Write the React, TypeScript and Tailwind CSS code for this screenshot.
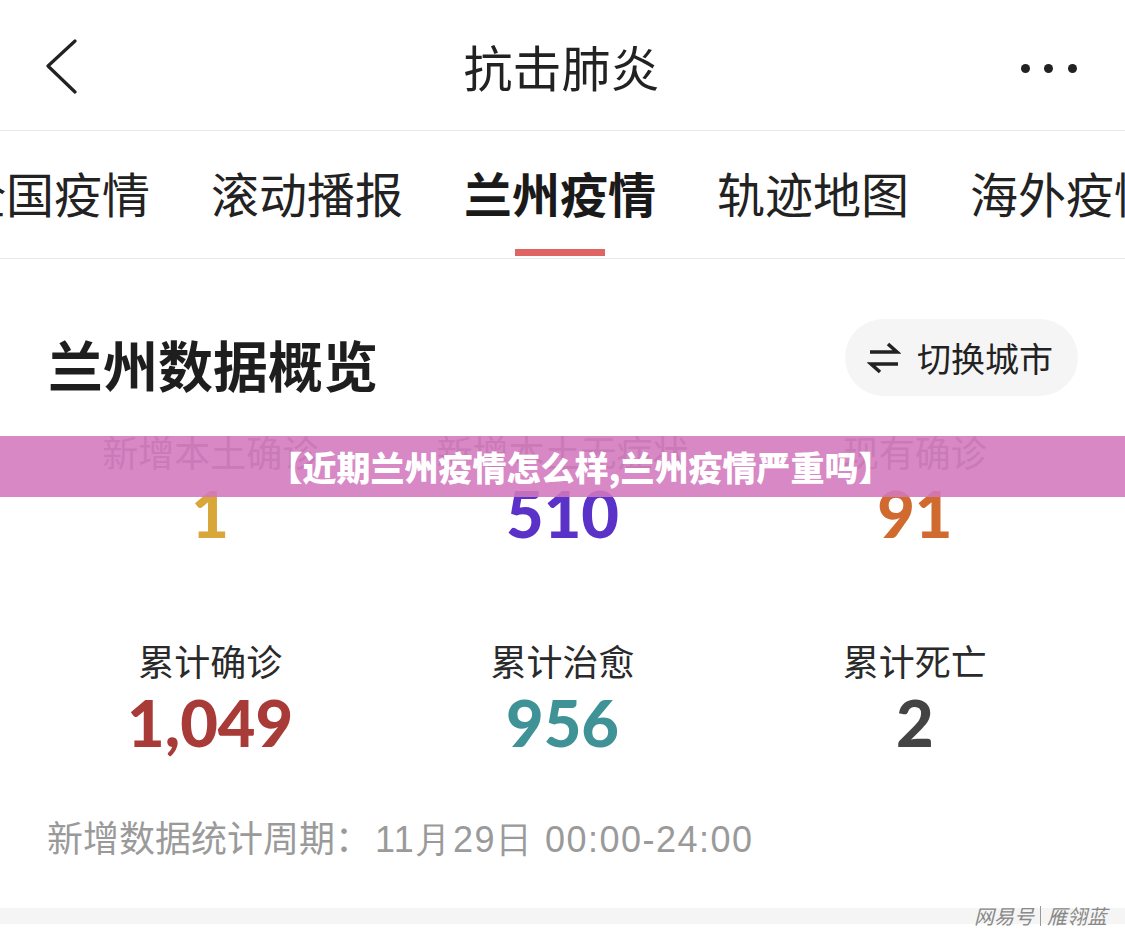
const CJK = "font-['Noto_Sans_CJK_SC','Noto_Sans',sans-serif]";
const NUM = "font-['Lato','Noto_Sans',sans-serif]";

const TABS = ["全国疫情", "滚动播报", "兰州疫情", "轨迹地图", "海外疫情"];

const ROW_ONE = [
  { label: "新增本土确诊", value: "1", color: "text-[#d9a63a]" },
  { label: "新增本土无症状", value: "510", color: "text-[#5a32c8]" },
  { label: "现有确诊", value: "91", color: "text-[#d06a2f]" },
];

const ROW_TWO = [
  { label: "累计确诊", value: "1,049", color: "text-[#a83b37]" },
  { label: "累计治愈", value: "956", color: "text-[#3f9296]" },
  { label: "累计死亡", value: "2", color: "text-[#444444]" },
];

function StatRow({
  items,
  labelColor,
  className,
}: {
  items: typeof ROW_ONE;
  labelColor: string;
  className?: string;
}) {
  return (
    <div className={`grid grid-cols-3 px-[34px] ${className ?? ""}`}>
      {items.map((item) => (
        <div key={item.label} className="flex flex-col items-center">
          <div className={`${CJK} text-[36px] leading-[40px] ${labelColor}`}>{item.label}</div>
          <div className={`${NUM} mt-[10px] text-[65px] leading-[64px] font-black ${item.color}`}>
            {item.value}
          </div>
        </div>
      ))}
    </div>
  );
}

export default function App() {
  return (
    <div className={`relative h-[935px] w-[1125px] overflow-hidden bg-white ${CJK}`}>
      {/* top bar */}
      <div className="flex h-[131px] items-center justify-between border-b border-[#e8e8e8] pl-[44px] pr-[48px]">
        <svg width="34" height="56" viewBox="0 0 34 56" className="mt-[4px]">
          <path d="M31 2 L4 27 L31 53" fill="none" stroke="#222" strokeWidth="3.2" strokeLinecap="round" strokeLinejoin="round" />
        </svg>
        <div className="ml-[24px] text-[49px] leading-none text-[#222]">抗击肺炎</div>
        <div className="mt-[6px] flex w-[56px] items-center justify-between">
          <span className="h-[9px] w-[9px] rounded-full bg-[#222]" />
          <span className="h-[9px] w-[9px] rounded-full bg-[#222]" />
          <span className="h-[9px] w-[9px] rounded-full bg-[#222]" />
        </div>
      </div>

      {/* tabs */}
      <div className="relative h-[128px] border-b border-[#e8e8e8]">
        <div className="ml-[-42px] flex h-full items-start gap-[61px] whitespace-nowrap pt-[33px]">
          {TABS.map((tab) => (
            <div key={tab} className="relative flex flex-col items-center">
              <span
                className={`text-[48px] leading-[56px] ${
                  tab === "兰州疫情" ? "font-bold text-[#1a1a1a]" : "text-[#222]"
                }`}
              >
                {tab}
              </span>
              {tab === "兰州疫情" && (
                <span className="absolute top-[85px] h-[7px] w-[90px] bg-[#e06464]" />
              )}
            </div>
          ))}
        </div>
      </div>

      {/* section header */}
      <div className="flex items-center justify-between pl-[48px] pr-[47px] pt-[72px]">
        <div className="text-[55px] font-bold leading-none text-[#1e1e1e]">兰州数据概览</div>
        <div className="mt-[-12px] flex h-[77px] w-[233px] items-center gap-[16px] rounded-full bg-[#f5f5f5] pl-[22px]">
          <svg width="34" height="32" viewBox="0 0 34 32" className="shrink-0">
            <path d="M3 10 H30 L21 2" fill="none" stroke="#222" strokeWidth="3.6" strokeLinejoin="miter" />
            <path d="M31 22 H4 L13 30" fill="none" stroke="#222" strokeWidth="3.6" strokeLinejoin="miter" />
          </svg>
          <span className="text-[34px] leading-none text-[#222]">切换城市</span>
        </div>
      </div>

      <StatRow items={ROW_ONE} labelColor="text-[#8a8a8a]" className="mt-[35px]" />
      <StatRow items={ROW_TWO} labelColor="text-[#2a2a2a]" className="mt-[95px]" />

      <div className="mt-[62px] pl-[47px] text-[36px] leading-[40px] text-[#9a9a9a]">
        新增数据统计周期：
        <span className="ml-[4px] font-['Liberation_Sans','Noto_Sans',sans-serif] tracking-[1.5px]">
          11月29日 00:00-24:00
        </span>
      </div>

      {/* bottom strip */}
      <div className="mt-[48px] h-[16px] bg-[#f5f5f5]" />

      {/* watermark */}
      <div className="absolute bottom-[9px] right-[18px] flex items-center gap-[6px] text-[20px] leading-none text-[#888] italic">
        <span>网易号</span>
        <span className="h-[20px] w-[1px] bg-[#999]" />
        <span>雁翎蓝</span>
      </div>

      {/* title banner overlay */}
      <div className="absolute left-0 right-0 top-[436px] flex h-[61px] items-center justify-center bg-[#d178bd]/[0.88] pl-[36px]">
        <span className="text-[34px] font-black leading-none text-white">【近期兰州疫情怎么样,兰州疫情严重吗】</span>
      </div>
    </div>
  );
}
